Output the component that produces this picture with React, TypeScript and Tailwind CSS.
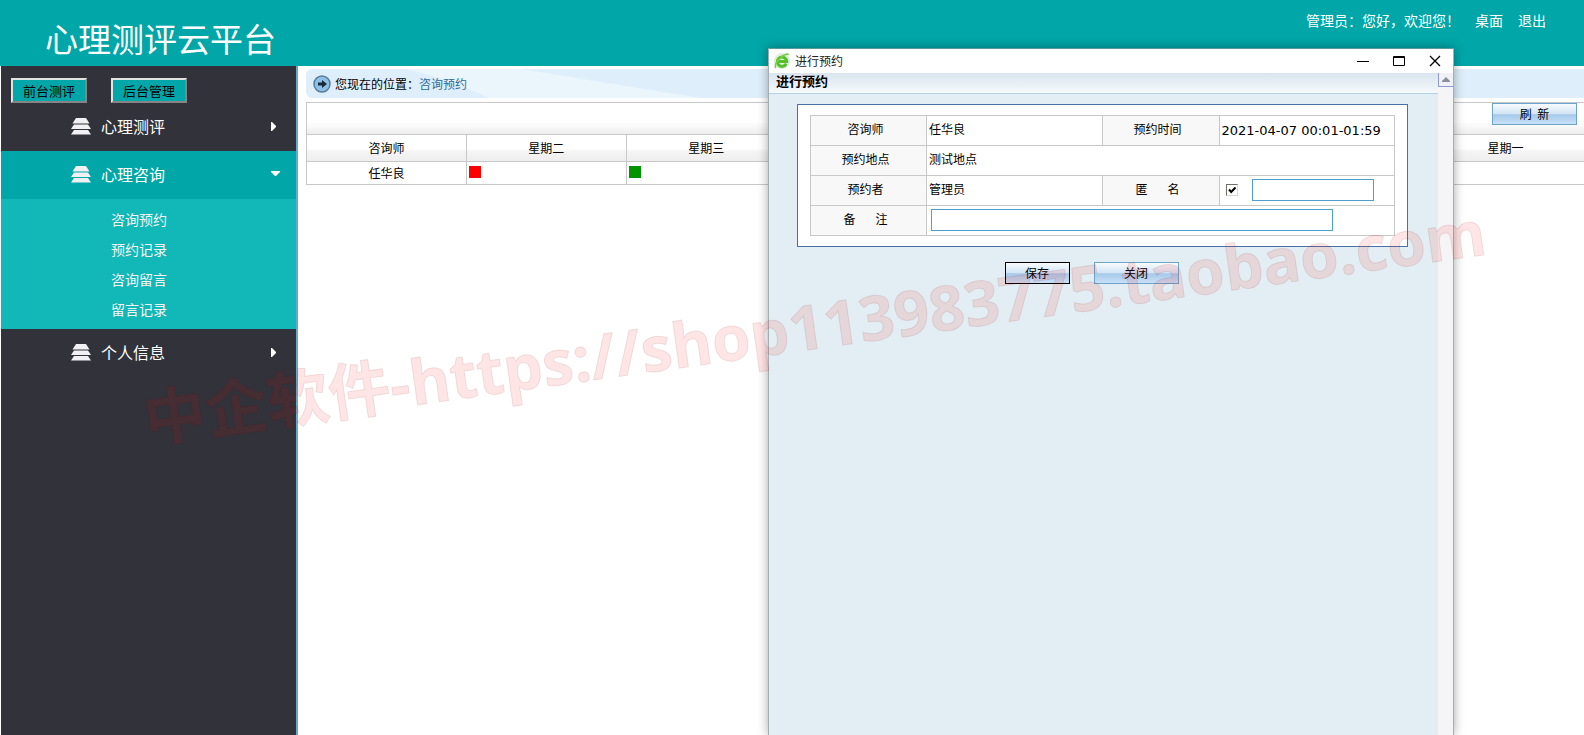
import type { ReactNode } from 'react'
import clsx from 'clsx'

const sections = [
  { title: '心理测评', open: false, items: [] },
  { title: '心理咨询', open: true, items: ['咨询预约', '预约记录', '咨询留言', '留言记录'] },
  { title: '个人信息', open: false, items: [] },
]

const columns = ['咨询师', '星期二', '星期三', '星期四', '星期五', '星期六', '星期日', '星期一']

const schedule = [
  { name: '任华良', slots: ['full', 'free', '', '', '', '', ''] },
]

function StackIcon() {
  return (
    <svg width="20" height="17" viewBox="0 0 20 17" fill="#f1f1f3">
      <path d="M5 0h10l3.500 5.500h-17z" />
      <path d="M3 6.500h14l3 4.500H0z" />
      <path d="M3 12h14l3 4.500H0z" />
    </svg>
  )
}

function BrowserIcon() {
  return (
    <svg width="16" height="16" viewBox="0 0 16 16" fill="none">
      <circle cx="8" cy="8" r="7.500" fill="#e3efe0" stroke="#cfdccf" strokeWidth=".6" />
      <path d="M12.200 10.800A4.700 4.700 0 1 1 12.700 8.500H5" stroke="#55c02b" strokeWidth="3" />
      <path d="M2 15C.2 12.800 2.200 8.400 6.400 4.800 9.600 2 13.200.8 14.800 1.400" stroke="#6fd23c" strokeWidth="1.600" />
    </svg>
  )
}

function Sidebar() {
  return (
    <aside className="ml-px w-[297px] shrink-0 border-r-2 border-[#68a8c8] bg-[#31323a]">
      <div className="flex gap-6 pl-2.5 pt-3">
        {['前台测评', '后台管理'].map((label) => (
          <button
            key={label}
            type="button"
            className="h-[25px] w-[76px] border-2 border-t-[#e3e3e3] border-l-[#e3e3e3] border-r-[#858585] border-b-[#858585] bg-[#00a6a8] text-[13px] leading-5 text-black"
          >
            {label}
          </button>
        ))}
      </div>
      <nav>
        {sections.map((section) => (
          <div key={section.title}>
            <button
              type="button"
              className={clsx(
                'flex h-12 w-full items-center pb-0.5 pl-[70px] pr-4 text-base text-white',
                section.open && 'bg-[#00a6a8]',
              )}
            >
              <StackIcon />
              <span className="ml-2.5 flex-1 text-left">{section.title}</span>
              {section.open ? (
                <svg width="9" height="6" viewBox="0 0 9 6" fill="#fff">
                  <path d="M0 0h9v1L5 5H4L0 1z" />
                </svg>
              ) : (
                <svg width="9" height="9" viewBox="0 0 9 9" fill="#fff">
                  <path d="M0 0h1l4 4v1L1 9H0z" />
                </svg>
              )}
            </button>
            {section.open && (
              <ul className="bg-[#12b7b8] py-[5px]">
                {section.items.map((item) => (
                  <li key={item}>
                    <a href="#" className="block pl-[110px] text-sm leading-[30px] text-[#f3f3f3]">
                      {item}
                    </a>
                  </li>
                ))}
              </ul>
            )}
          </div>
        ))}
      </nav>
    </aside>
  )
}

function Breadcrumb() {
  return (
    <div className="relative h-[29px] overflow-hidden rounded-l-md bg-[#deeffb]">
      <svg className="absolute left-0 top-0" width="420" height="29" viewBox="0 0 420 29">
        <path d="M100 0H215L395 29H182Q150 12 100 0z" fill="#eaf5fc" />
      </svg>
      <div className="relative flex h-full items-center gap-1 pl-[7px] text-xs">
        <svg width="18" height="18" viewBox="0 0 18 18">
          <circle cx="9" cy="9" r="8" fill="#8fc1e8" stroke="#587b98" strokeWidth="1.500" />
          <path d="M5 7.500h4V5l5 4-5 4v-2.500H5z" fill="#1b2a3a" />
        </svg>
        <span>
          您现在的位置：
          <a href="#" className="text-[#2a6c9c]">咨询预约</a>
        </span>
      </div>
    </div>
  )
}

function GlossButton({ children, className }: { children: ReactNode; className?: string }) {
  return (
    <button
      type="button"
      className={clsx(
        'h-[22px] border bg-[linear-gradient(#f8fbfe,#d3e5f5_48%,#a6c9ea_54%,#c8e0f7)] text-xs leading-5 text-black',
        className,
      )}
    >
      {children}
    </button>
  )
}

function Schedule() {
  return (
    <div className="mt-1">
      <div className="flex h-8 justify-end border-l border-t border-[#c8c8c8] bg-linear-to-b from-white from-60% to-[#eeeeee] pr-[7px]">
        <GlossButton className="w-[85px] border-[#6ba5c9]">刷&nbsp; 新</GlossButton>
      </div>
      <table className="w-[calc(100%+2px)] table-fixed border-collapse text-center text-xs">
        <thead>
          <tr className="h-[27px] bg-linear-to-b from-white from-50% via-[#f5f5f5] via-60% to-[#ededed]">
            {columns.map((column) => (
              <th key={column} className="border border-[#c8c8c8] p-0 font-normal">{column}</th>
            ))}
          </tr>
        </thead>
        <tbody>
          {schedule.map((row) => (
            <tr key={row.name} className="h-[23px]">
              <td className="border border-[#c8c8c8] p-0">{row.name}</td>
              {row.slots.map((slot, i) => (
                <td key={i} className="border border-[#c8c8c8] p-0 pb-0.5 pl-0.5">
                  {slot && (
                    <a
                      href="#"
                      className={clsx('block size-3', slot === 'full' ? 'bg-[#ff0000]' : 'bg-[#009400]')}
                    />
                  )}
                </td>
              ))}
            </tr>
          ))}
        </tbody>
      </table>
    </div>
  )
}

const headCell = 'border border-[#c8c8c8] bg-[#f8f8f8] p-0 pb-1 pr-1.5 font-normal'
const bodyCell = 'border border-[#c8c8c8] bg-white p-0 pb-1 pl-0.5 text-left'
const fieldCell = 'border border-[#c8c8c8] bg-white p-0 pb-0.5 text-left'
const textField = 'block h-[22px] border border-[#4f9fce] bg-white px-1 outline-none'

function BookingDialog() {
  return (
    <div
      role="dialog"
      className="absolute bottom-0 right-[130px] top-12 flex w-[686px] flex-col border border-b-0 border-[#a3adb2] border-t-[#5b9a9b] bg-[#e2eef3] text-xs text-black shadow-[0_0_10px_rgba(0,0,0,0.35)]"
    >
      <div className="flex h-6 shrink-0 items-center bg-white pl-[5px] pr-3">
        <BrowserIcon />
        <span className="ml-[5px] flex-1 text-[#222]">进行预约</span>
        <div className="flex items-center gap-6">
          <button type="button" aria-label="最小化">
            <svg width="12" height="12" viewBox="0 0 12 12" stroke="#000">
              <path d="M0 6.500h12" />
            </svg>
          </button>
          <button type="button" aria-label="最大化">
            <svg width="12" height="10" viewBox="0 0 12 10" fill="none" stroke="#000">
              <path d="M.5.5h11v9H.5zM0 1.500h12" />
            </svg>
          </button>
          <button type="button" aria-label="关闭窗口">
            <svg width="12" height="12" viewBox="0 0 12 12" stroke="#000" strokeWidth="1.300">
              <path d="M1 1l10 10M11 1L1 11" />
            </svg>
          </button>
        </div>
      </div>

      <div className="flex flex-1">
        <div className="flex-1">
          <h2 className="h-[21px] border-b border-[#b5d3e6] bg-linear-to-b from-[#d9e5ee] to-[#f5f9fb] pl-[7px] text-[13px] font-bold leading-4">
            进行预约
          </h2>
          <form>
            <div className="ml-7 mr-[30px] mt-2.5 border border-[#4a71a5] bg-white px-3 py-2.5">
              <table className="w-full table-fixed border-collapse">
                <colgroup>
                  <col className="w-[116px]" />
                  <col />
                  <col className="w-[117px]" />
                  <col />
                </colgroup>
                <tbody>
                  <tr className="h-[30px]">
                    <th className={headCell}>咨询师</th>
                    <td className={bodyCell}>任华良</td>
                    <th className={headCell}>预约时间</th>
                    <td className="border border-[#c8c8c8] bg-white p-0 pl-0.5 font-['DejaVu_Sans',sans-serif] text-[13px]">
                      2021-04-07 00:01-01:59
                    </td>
                  </tr>
                  <tr className="h-[30px]">
                    <th className={headCell}>预约地点</th>
                    <td className={bodyCell} colSpan={3}>测试地点</td>
                  </tr>
                  <tr className="h-[30px]">
                    <th className={headCell}>预约者</th>
                    <td className={bodyCell}>管理员</td>
                    <th className={headCell}>
                      <label id="anon-label" htmlFor="anon">
                        匿<span className="inline-block w-5" />名
                      </label>
                    </th>
                    <td className={fieldCell}>
                      <div className="flex items-center pl-1.5">
                        <span className="relative size-3">
                          <input
                            id="anon"
                            type="checkbox"
                            defaultChecked
                            className="peer block size-3 appearance-none border border-b-[#d8d8d0] border-l-[#6f6f68] border-r-[#d8d8d0] border-t-[#6f6f68] bg-white"
                          />
                          <svg
                            className="pointer-events-none absolute inset-0 hidden peer-checked:block"
                            width="12"
                            height="12"
                            viewBox="0 0 12 12"
                            fill="none"
                            stroke="#000"
                            strokeWidth="2"
                          >
                            <path d="M3 5.500l2.200 2.500L9.500 3.500" />
                          </svg>
                        </span>
                        <input type="text" aria-labelledby="anon-label" className={clsx(textField, 'ml-3.5 w-[122px]')} />
                      </div>
                    </td>
                  </tr>
                  <tr className="h-[30px]">
                    <th className={headCell}>
                      <label htmlFor="remark">
                        备<span className="inline-block w-5" />注
                      </label>
                    </th>
                    <td className={fieldCell} colSpan={3}>
                      <input id="remark" type="text" className={clsx(textField, 'ml-1 w-[402px]')} />
                    </td>
                  </tr>
                </tbody>
              </table>
            </div>
            <div className="mt-[15px] flex justify-center gap-6 pr-6">
              <GlossButton className="w-[65px] border-black">保存</GlossButton>
              <GlossButton className="w-[85px] border-[#6ba5c9]">关闭</GlossButton>
            </div>
          </form>
        </div>

        {/* Scroll track */}
        <div className="w-[15px] bg-[#f5f5f8]">
          <div className="flex h-3.5 items-center justify-center border-b border-l border-[#8d9bd0] bg-[#f0f0f6]">
            <svg width="8" height="5" viewBox="0 0 8 5" fill="#8a8f9e">
              <path d="M4 0l4 4v1H0V4z" />
            </svg>
          </div>
        </div>
      </div>
    </div>
  )
}

export default function App() {
  return (
    <div className="relative flex min-h-screen flex-col overflow-hidden bg-white font-['Noto_Sans_CJK_SC',sans-serif] text-black">
      <header className="flex h-[66px] shrink-0 items-start justify-between bg-[#00a6a8] pl-[45px] pr-[38px] text-white">
        <h1 className="pt-3.5 text-[33px] leading-[48px]">心理测评云平台</h1>
        <div className="flex gap-[15px] pt-2.5 text-sm leading-5">
          <span>管理员：您好，欢迎您！</span>
          <a href="#">桌面</a>
          <a href="#">退出</a>
        </div>
      </header>

      <div className="flex flex-1">
        <Sidebar />
        <main className="min-w-0 flex-1 overflow-hidden pl-2 pt-[3px]">
          <Breadcrumb />
          <Schedule />
        </main>
      </div>

      <BookingDialog />

      {/* Watermark */}
      <div className="pointer-events-none absolute left-[144px] top-[388px] origin-left -rotate-8 whitespace-nowrap font-['Open_Sans','Noto_Sans_CJK_SC',sans-serif] text-[62px] font-bold leading-none text-[#ff0000]/10 [-webkit-text-stroke:1px_rgba(120,0,0,0.1)]">
        中企软件-https://shop113983775.taobao.com
      </div>
    </div>
  )
}
